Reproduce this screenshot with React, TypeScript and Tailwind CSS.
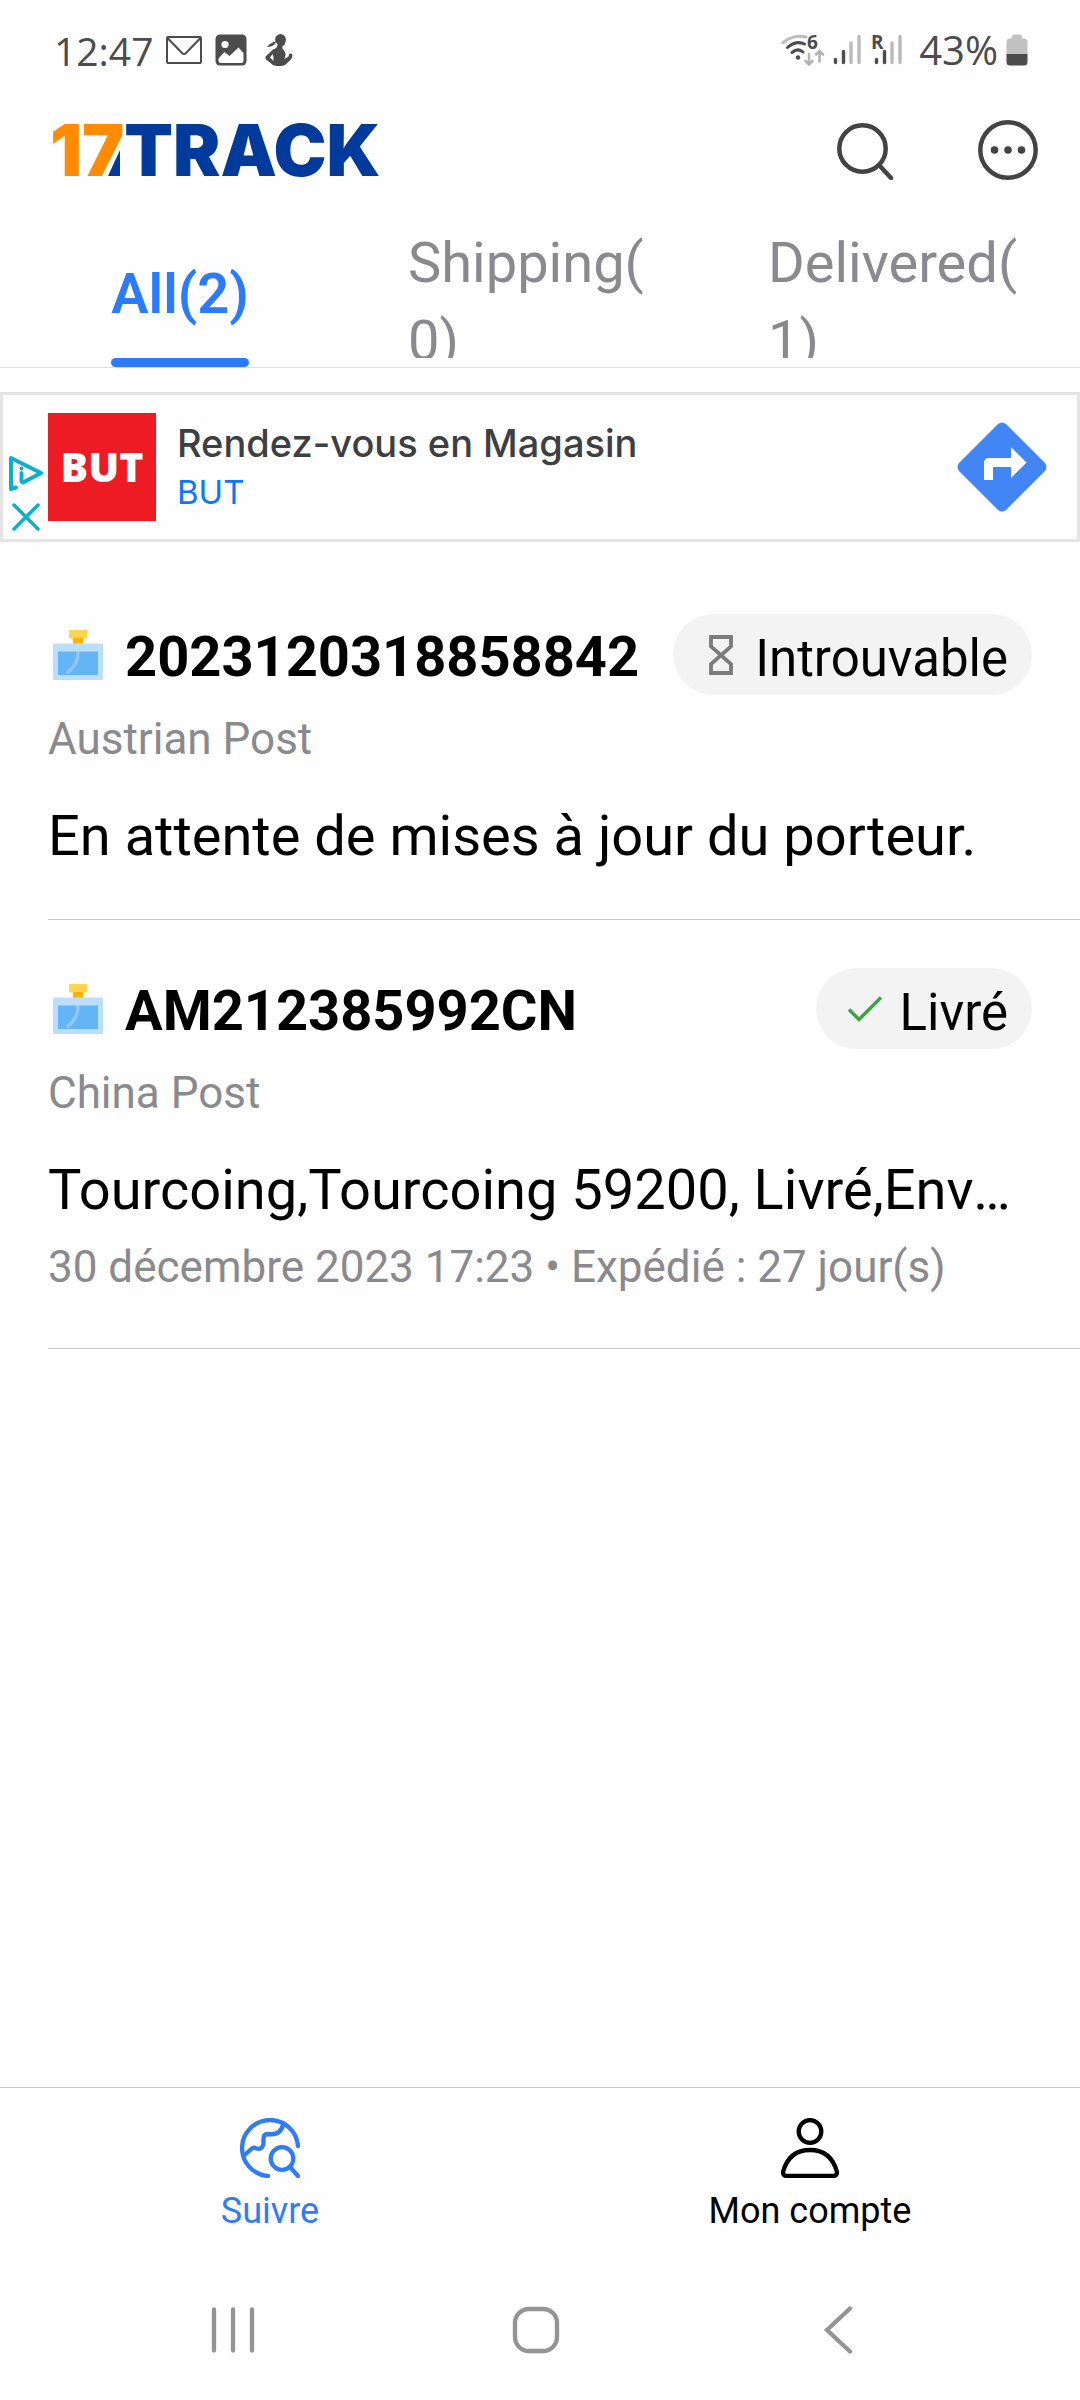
import React from "react";

type Status = "pending" | "delivered";

interface Parcel {
  number: string;
  carrier: string;
  status: Status;
  label: string;
  event: string;
  meta?: string;
}

const parcels: Parcel[] = [
  {
    number: "2023120318858842",
    carrier: "Austrian Post",
    status: "pending",
    label: "Introuvable",
    event: "En attente de mises à jour du porteur.",
  },
  {
    number: "AM212385992CN",
    carrier: "China Post",
    status: "delivered",
    label: "Livré",
    event: "Tourcoing,Tourcoing 59200, Livré,Envoi remis au destinataire",
    meta: "30 décembre 2023 17:23 • Expédié : 27 jour(s)",
  },
];

function StatusBar() {
  return (
    <div className="flex h-[100px] items-center justify-between pr-[52px] pl-[54px] font-['Open_Sans'] text-[#4c4c4c]">
      <div className="flex items-center">
        <span className="w-28 text-[39px] leading-none">12:47</span>
        <svg width="36" height="28" viewBox="0 0 36 28" fill="none" stroke="currentColor" strokeWidth="2">
          <rect x="1" y="1" width="34" height="26" rx="1" />
          <path d="M1.500 2 16 17Q18 19 20 17L34.500 2" />
        </svg>
        <svg className="ml-[13px]" width="32" height="32" viewBox="0 0 32 32">
          <rect x="0.500" y="0.500" width="31" height="31" rx="4.500" fill="currentColor" />
          <circle cx="10" cy="10.500" r="3.600" fill="#fff" />
          <path d="M3.500 24.500 9.500 18 14.500 22 23.500 13.500 28.500 19V26.500Q28.500 29 26 29H6Q3.500 29 3.500 26.500Z" fill="#fff" />
        </svg>
        <svg className="ml-[18px]" width="28" height="32" viewBox="0 0 28 32" fill="currentColor">
          <circle cx="15.500" cy="5.500" r="5.400" />
          <path d="M13 5 20.500 7 19.500 11 17.500 12V15Q20.500 17 20.500 21L19.500 25 23.500 22.500 24 20.500Q26 18.500 27.500 21 27.500 24 25 26.500L20 31Q14 33.500 8 31L0.500 25V22.500L8 15.500Q12 14.500 12.500 11Z" />
          <path d="M11 7.500Q5 8.500 2 13 7 13 10 10Z" />
          <path d="M7.500 20 5 23.500 8.500 27Q9 23 7.500 20Z" fill="#fff" />
        </svg>
      </div>
      <div className="flex items-center">
        <svg width="122" height="50" viewBox="0 -8 122 50" fill="none" strokeLinecap="round">
          <path d="M2 9.500Q13 1 25 4" stroke="#bcbcbc" strokeWidth="3" />
          <path d="M6.500 14.500Q15 7 23.500 11M11 19.500Q17 14.500 22 19" stroke="#4c4c4c" strokeWidth="3" />
          <circle cx="17" cy="24.500" r="2.200" fill="#4c4c4c" />
          <path d="M28 21V31M24.500 28 28 31.500 31.500 28M38.500 28.500V18.500M35 21.500 38.500 18 42 21.500" stroke="#b4b4b4" strokeWidth="2.600" />
          <path d="M54.500 26.500V29.500M62.500 18.500V29.500M95.500 26.500V29.500M103.500 18.500V29.500" stroke="#4c4c4c" strokeWidth="3.400" />
          <path d="M70 10V29.500M78 3.500V29.500M111 10V29.500M119 3.500V29.500" stroke="#bababa" strokeWidth="3.400" />
          <text x="26" y="15.500" fontSize="19" fontWeight="700" fill="#4c4c4c">6</text>
          <text x="90" y="15.500" fontSize="19" fontWeight="700" fill="#4c4c4c">R</text>
        </svg>
        <span className="ml-4 text-[40px] leading-none">43%</span>
        <svg className="ml-2" width="22" height="32" viewBox="0 0 22 32">
          <path d="M6 3Q6 .500 8 .500H14Q16 .500 16 3V4.500H18Q21.500 4.500 21.500 8V20H.500V8Q.500 4.500 4 4.500H6Z" fill="#c1c1c1" />
          <path d="M.500 20H21.500V28Q21.500 31.500 18 31.500H4Q.500 31.500 .500 28Z" fill="#4c4c4c" />
        </svg>
      </div>
    </div>
  );
}

function Header() {
  return (
    <header className="flex h-[100px] items-center justify-between pr-[42px] pl-[50px]">
      <h1 aria-label="17TRACK" className="relative flex items-center font-['Inter'] text-[71px] leading-none font-black">
        <span className="text-[#ff8c00]">17</span>
        <span className="text-[#003a9b]">TRACK</span>
        <svg className="absolute bottom-[10px] left-[58px]" width="12" height="26" viewBox="0 0 12 26">
          <path d="M12 0V26H0Z" fill="#003a9b" />
        </svg>
      </h1>
      <div className="flex items-center gap-[84px]">
        <button aria-label="Rechercher">
          <svg width="58" height="60" viewBox="0 0 58 60" fill="none" stroke="#434343" strokeWidth="4.500" strokeLinecap="round">
            <circle cx="26.500" cy="28.500" r="23.200" />
            <path d="M43 45 55 58" />
          </svg>
        </button>
        <button aria-label="Plus">
          <svg width="60" height="60" viewBox="0 0 60 60">
            <circle cx="30" cy="30" r="27.700" fill="none" stroke="#434343" strokeWidth="4.500" />
            <g fill="#434343">
              <circle cx="16.500" cy="30" r="3.800" />
              <circle cx="30" cy="30" r="3.800" />
              <circle cx="43.500" cy="30" r="3.800" />
            </g>
          </svg>
        </button>
      </div>
    </header>
  );
}

function Tabs() {
  return (
    <nav className="grid h-[168px] grid-cols-3 border-b border-[#dcdcdc] text-left text-[56px] leading-[78px] text-[#8a8a8e]">
      <button className="relative flex items-center justify-center pt-5 font-semibold text-[#2b7bff]">
        All(2)
        <span className="absolute bottom-0 h-[9px] w-[138px] rounded-full bg-[#2b7bff]" />
      </button>
      <button className="mb-[9px] flex items-start overflow-hidden px-12 pt-6 text-left">
        <span>Shipping(<wbr />0)</span>
      </button>
      <button className="mb-[9px] flex items-start overflow-hidden px-12 pt-6 text-left">
        <span>Delivered(<wbr />1)</span>
      </button>
    </nav>
  );
}

function Ad() {
  return (
    <aside className="mt-6 flex h-[150px] items-center border-[3px] border-[#e4e4e4] pr-[30px]">
      <div className="flex w-[45px] flex-col items-center gap-3 self-end pb-2">
        <button aria-label="Infos sur la publicité">
          <svg width="36" height="36" viewBox="0 0 36 36" fill="none" stroke="#0ab0cc" strokeWidth="4" strokeLinejoin="round" strokeLinecap="round">
            <path d="M8 32.500 3 34V3L33 18 15 27.500" />
            <path d="M13.500 18V26.500" />
            <circle cx="13.500" cy="13.500" r="2" fill="#0ab0cc" stroke="none" />
          </svg>
        </button>
        <button aria-label="Fermer la publicité">
          <svg width="28" height="28" viewBox="0 0 28 28" fill="none" stroke="#0ab0cc" strokeWidth="3.500" strokeLinecap="round">
            <path d="M2 2 26 26M26 2 2 26" />
          </svg>
        </button>
      </div>
      <div className="flex h-[108px] w-[108px] items-center justify-center bg-[#ed1c24] font-['Open_Sans'] text-[41px] font-extrabold text-white">
        BUT
      </div>
      <div className="ml-[21px] flex-1 font-['Inter']">
        <div className="text-[38px] leading-[50px] font-medium text-[#3c4043]">Rendez-vous en Magasin</div>
        <a href="#but" className="block text-[33px] leading-[48px] text-[#0b79f5]">BUT</a>
      </div>
      <button aria-label="Itinéraire">
        <svg width="90" height="90" viewBox="0 0 90 90">
          <path d="M41 2Q45-1 49 2L88 41Q91 45 88 49L49 88Q45 91 41 88L2 49Q-1 45 2 41Z" fill="#4285f4" />
          <path d="M27 58V41Q27 36 32 36H54V25L69.500 40.500 54 56V45H36V58Z" fill="#fff" />
        </svg>
      </button>
    </aside>
  );
}

function PerfumeIcon() {
  return (
    <svg width="50" height="50" viewBox="0 0 50 50">
      <rect x="16" y="0" width="18.500" height="8.500" rx="1" fill="#ffd54f" />
      <rect x="20" y="8" width="10" height="6" fill="#ffb300" />
      <rect x="0" y="13.500" width="50" height="36.500" rx="1.500" fill="#bbdefb" />
      <rect x="5" y="21.500" width="40" height="23.500" fill="#64b5f6" />
      <path d="M25 14V22Q25 35 15 42" fill="none" stroke="#bbdefb" strokeOpacity=".5" strokeWidth="3.500" strokeLinecap="round" />
    </svg>
  );
}

function StatusPill({ status, label }: { status: Status; label: string }) {
  return (
    <span className="flex h-[81px] shrink-0 items-center rounded-full bg-[#f3f3f3] pr-6 pl-8 text-[51px] leading-none">
      {status === "pending" ? (
        <svg className="mr-[22px] ml-1" width="24" height="40" viewBox="0 0 24 40" fill="none" stroke="#7b7b7b" strokeWidth="3.800">
          <path d="M2 2H22V11.500L2 29V38H22V29L2 11.500Z" />
        </svg>
      ) : (
        <svg className="mr-[18px]" width="34" height="26" viewBox="0 0 34 26" fill="none" stroke="#43a047" strokeWidth="3.500">
          <path d="M1 13.500 11 23.500 33 1.500" />
        </svg>
      )}
      <span className="pt-2">{label}</span>
    </span>
  );
}

function ParcelRow({ parcel }: { parcel: Parcel }) {
  return (
    <li className="ml-12 border-b border-[#c8c8c8] pt-12 pb-[38px]">
      <div className="flex items-center justify-between pr-12">
        <div className="flex items-center gap-[22px] pl-[5px]">
          <PerfumeIcon />
          <span className="pt-[6px] text-[56px] leading-[75px] font-bold">{parcel.number}</span>
        </div>
        <StatusPill status={parcel.status} label={parcel.label} />
      </div>
      <div className="mt-4 text-[44px] leading-[56px] text-[#8a8a8e]">{parcel.carrier}</div>
      <div className="mt-6 truncate pr-12 text-[56px] leading-[90px]">{parcel.event}</div>
      {parcel.meta && <div className="mt-1 mb-[15px] text-[44px] leading-[56px] text-[#8a8a8e]">{parcel.meta}</div>}
    </li>
  );
}

function BottomTabs() {
  return (
    <nav className="flex h-[172px] border-t border-[#c4c4c4] text-[36px] leading-[42px]">
      <button className="flex w-1/2 flex-col items-center pt-[30px] text-[#2f7cf6]">
        <svg width="60" height="60" viewBox="0 0 60 60" fill="none" stroke="currentColor" strokeWidth="4.300" strokeLinecap="round">
          <path d="M58 28A28 28 0 1 0 28 58" />
          <path d="M4 37.500 12 30.500Q14 29 16.500 30.500 22 32 23.500 26V20Q24 16 28 16 41 18 43.500 5" />
          <circle cx="42" cy="40.500" r="11.300" />
          <path d="M50 49 58 58" />
        </svg>
        <span className="mt-3">Suivre</span>
      </button>
      <button className="flex w-1/2 flex-col items-center pt-[30px]">
        <svg width="60" height="60" viewBox="0 0 60 60" fill="none" stroke="currentColor" strokeWidth="4.300">
          <circle cx="30" cy="13.500" r="11.300" />
          <path d="M6 58Q3 57.500 3 54 9 32 30 32 51 32 57 54 57 57.500 54 58Z" />
        </svg>
        <span className="mt-3">Mon compte</span>
      </button>
    </nav>
  );
}

function SystemNav() {
  return (
    <div className="flex h-[141px] items-center justify-between pr-[219px] pl-[210px] text-[#949494]">
      <button aria-label="Applications récentes">
        <svg width="46" height="46" viewBox="0 0 46 46" stroke="currentColor" strokeWidth="4.300" strokeLinecap="round">
          <path d="M4 2.500V43.500M23 2.500V43.500M42 2.500V43.500" />
        </svg>
      </button>
      <button aria-label="Accueil">
        <svg width="48" height="48" viewBox="0 0 48 48" fill="none" stroke="currentColor" strokeWidth="4.300">
          <rect x="3" y="3" width="42" height="42" rx="14" />
        </svg>
      </button>
      <button aria-label="Retour">
        <svg width="46" height="48" viewBox="0 0 46 48" fill="none" stroke="currentColor" strokeWidth="4.300" strokeLinecap="round">
          <path d="M35 2.500 12 24 35 45.500" />
        </svg>
      </button>
    </div>
  );
}

export default function App() {
  return (
    <div className="flex min-h-screen flex-col bg-[#fefefe] font-['Roboto',sans-serif] text-black">
      <StatusBar />
      <Header />
      <Tabs />
      <Ad />
      <ul className="mt-6 flex-1">
        {parcels.map((p) => (
          <ParcelRow key={p.number} parcel={p} />
        ))}
      </ul>
      <BottomTabs />
      <SystemNav />
    </div>
  );
}
